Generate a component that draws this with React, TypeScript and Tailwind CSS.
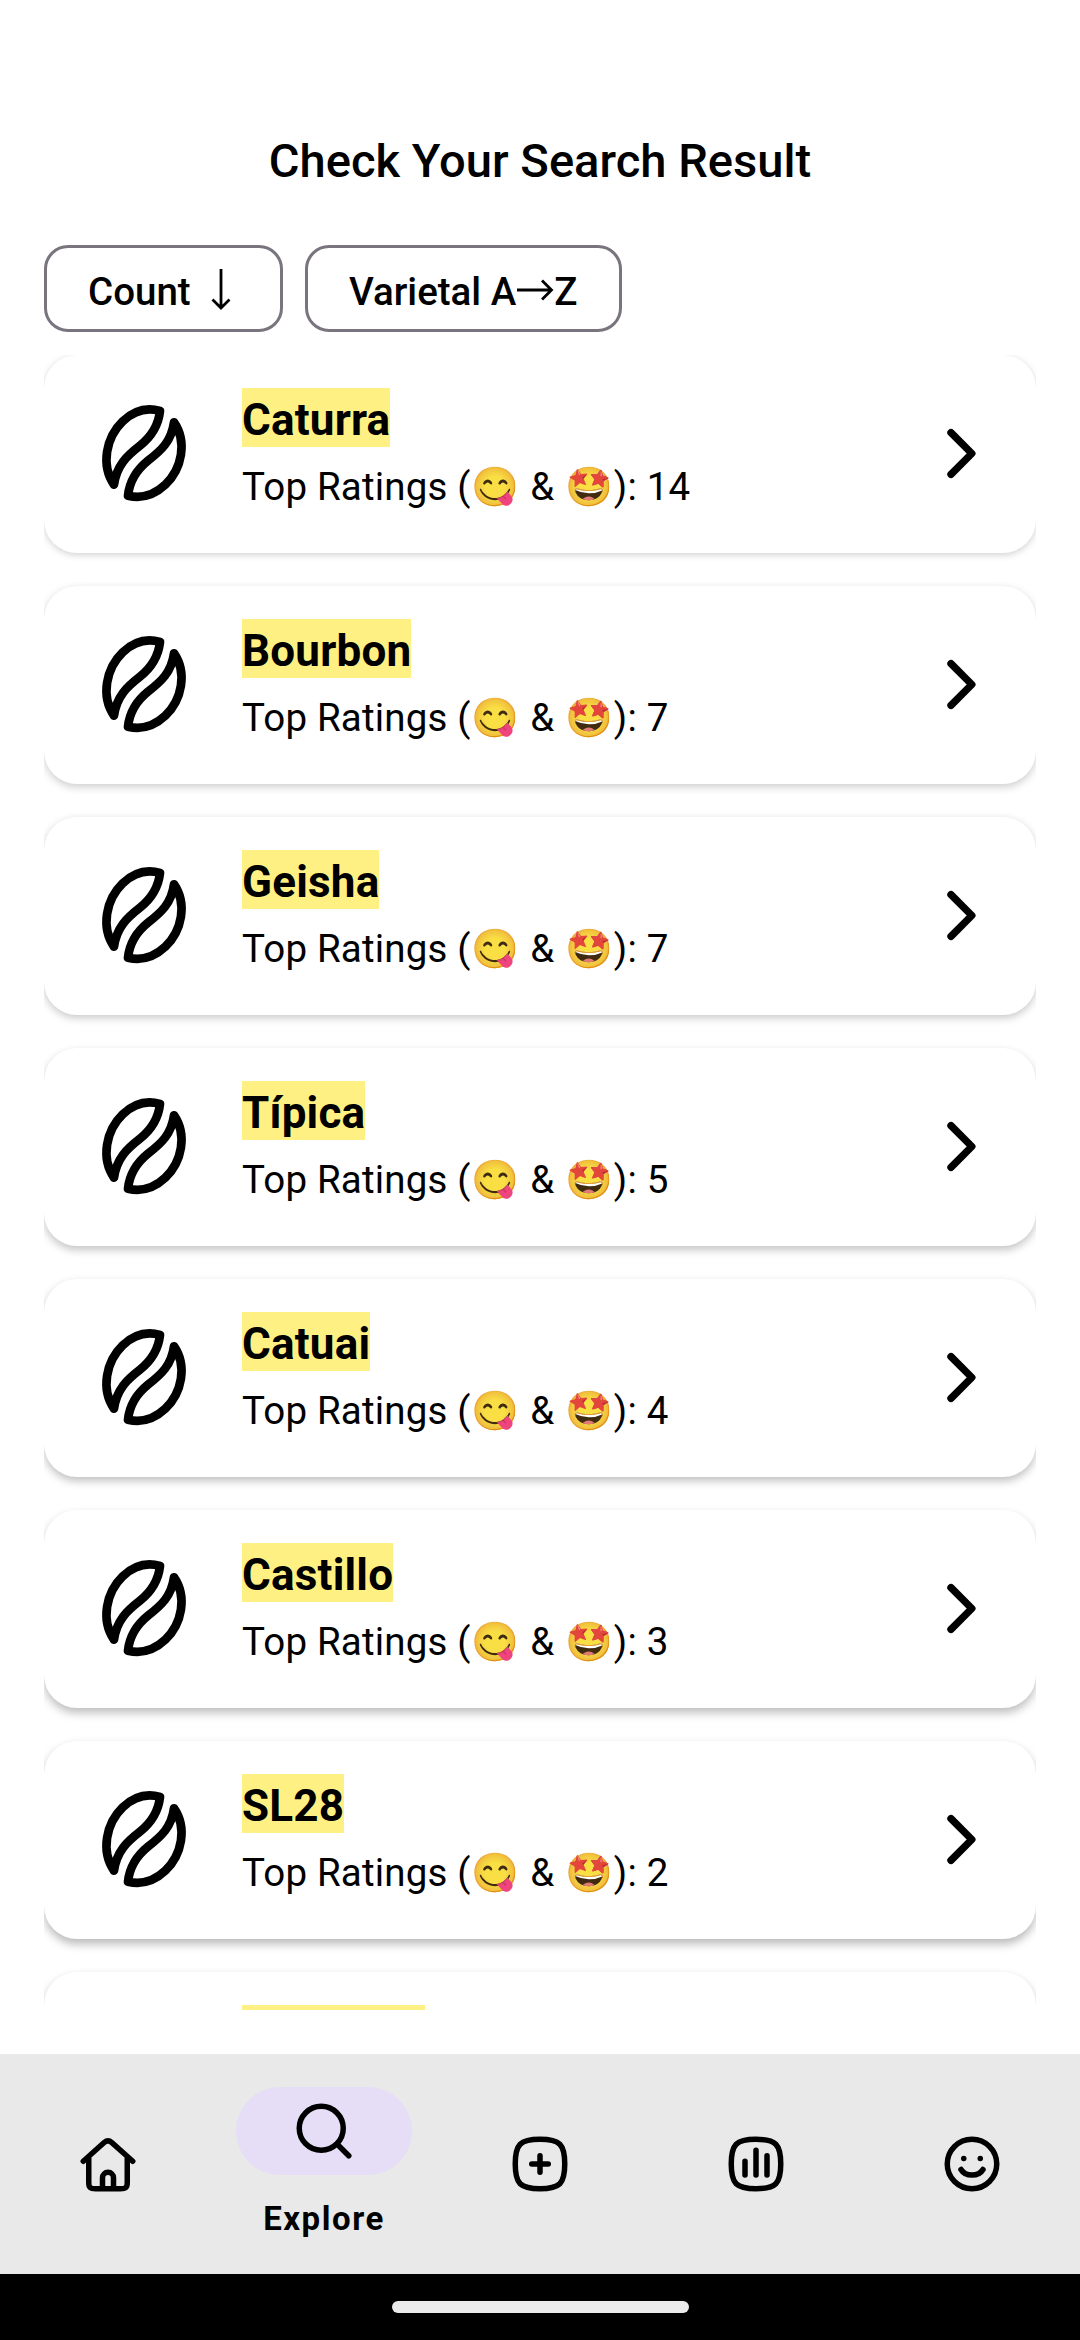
import React from "react";

type Varietal = { name: string; count: number; shadow: string };

const varietals: Varietal[] = [
  { name: "Caturra", count: 14, shadow: "shadow-[0_2px_7px_rgba(0,0,0,0.18)]" },
  { name: "Bourbon", count: 7, shadow: "shadow-[0_3px_8px_rgba(0,0,0,0.20)]" },
  { name: "Geisha", count: 7, shadow: "shadow-[0_3px_8px_rgba(0,0,0,0.22)]" },
  { name: "Típica", count: 5, shadow: "shadow-[0_4px_9px_rgba(0,0,0,0.23)]" },
  { name: "Catuai", count: 4, shadow: "shadow-[0_4px_9px_rgba(0,0,0,0.25)]" },
  { name: "Castillo", count: 3, shadow: "shadow-[0_5px_10px_rgba(0,0,0,0.26)]" },
  { name: "SL28", count: 2, shadow: "shadow-[0_5px_10px_rgba(0,0,0,0.28)]" },
];

function BeanIcon() {
  return (
    <svg className="size-[130px] shrink-0" viewBox="0 -3 390 390" fill="none" stroke="black" strokeWidth="26" strokeLinejoin="round">
      <path d="M102 284C62 226 78 142 128 94C160 64 198 51 240 63C236 100 216 138 180 167C140 198 110 226 102 284Z" />
      <path d="M282 97C322 155 306 236 256 284C224 314 186 327 144 317C148 279 168 241 204 212C244 181 274 154 282 97Z" />
    </svg>
  );
}

function ChevronIcon() {
  return (
    <svg className="h-[52px] w-[32px] shrink-0" viewBox="0 0 32 52" fill="none" stroke="black" strokeWidth="7.4" strokeLinecap="round" strokeLinejoin="round">
      <path d="M5 4.7L25.8 25.5L5 46.3" />
    </svg>
  );
}

function NavIcon({ children }: { children: React.ReactNode }) {
  return (
    <svg className="size-[66px]" viewBox="0 0 24 24" fill="none" stroke="black" strokeWidth="2" strokeLinecap="round" strokeLinejoin="round">
      {children}
    </svg>
  );
}

function Emoji({ children }: { children: string }) {
  return <span className="mx-[0.8px] inline-block leading-none saturate-[.88]">{children}</span>;
}

const squircle = "M3 12C3 4.8 4.8 3 12 3s9 1.8 9 9-1.8 9-9 9-9-1.8-9-9Z";

function Card({ item }: { item: Varietal }) {
  return (
    <li className={`flex h-[198px] shrink-0 items-center rounded-[33px] bg-white pl-9 ${item.shadow}`}>
      <BeanIcon />
      <div className="ml-8 flex h-full flex-1 flex-col items-start pt-[33px]">
        <span className="h-[59px] bg-[#fff084] pt-[4px] text-[44px] leading-[56px] font-bold tracking-[0.2px]">{item.name}</span>
        <span className="mt-[14px] h-[51px] text-[38.5px] leading-[51px] tracking-[0.18px] whitespace-pre">
          Top Ratings (<Emoji>😋</Emoji> &amp; <Emoji>🤩</Emoji>): {item.count}
        </span>
      </div>
      <div className="mr-[58px]">
        <ChevronIcon />
      </div>
    </li>
  );
}

export default function App() {
  return (
    <div className="flex h-[2340px] w-[1080px] flex-col overflow-hidden bg-white font-['Roboto',sans-serif] text-black">
      <h1 className="mt-[129px] h-[64px] text-center text-[47.1px] leading-[64px] font-medium">Check Your Search Result</h1>
      <div className="mt-[52px] ml-[44px] flex h-[87px] gap-[22px]">
        <button className="flex w-[239px] items-center rounded-[24px] border-[3px] border-[#79747e] pt-[7px] pl-[41px] text-[38.5px] font-medium">
          Count
          <svg className="-mt-[5px] ml-[20px] h-[42px] w-[20px]" viewBox="0 0 20 42" fill="none" stroke="black" strokeWidth="2.8">
            <path d="M10 0V38M1.5 30.5L10 39L18.5 30.5" />
          </svg>
        </button>
        <button className="flex w-[317px] items-center rounded-[24px] border-[3px] border-[#79747e] pt-[7px] pl-[41px] text-[38.5px] font-medium">
          Varietal A
          <svg className="-mt-[4px] h-[22px] w-[38px]" viewBox="0 0 38 22" fill="none" stroke="black" strokeWidth="2.8">
            <path d="M1 11H35M26 1.5L35.5 11L26 20.5" />
          </svg>
          Z
        </button>
      </div>
      <ul className="mx-[44px] mt-[23px] flex h-[1655px] flex-col gap-[33px] overflow-hidden">
        {varietals.map((item) => (
          <Card key={item.name} item={item} />
        ))}
        <li className="h-[198px] shrink-0 rounded-[33px] bg-white pt-[33px] pl-[198px] shadow-[0_5px_10px_rgba(0,0,0,0.28)]">
          <div className="h-[59px] w-[183px] bg-[#fff084]" />
        </li>
      </ul>
      <nav className="mt-[44px] grid h-[220px] grid-cols-5 items-center justify-items-center bg-[#e9e9e9]">
        <NavIcon>
          <path d="M3 11l7.6-6.8q1.4-1.2 2.8 0L21 11M5 9.8v8.8c0 2 .5 2.4 2.5 2.4h9c2 0 2.5-.4 2.5-2.4V9.8M10 21v-4a2 2 0 0 1 4 0v4" />
        </NavIcon>
        <div className="flex h-full flex-col items-center pt-[33px]">
          <div className="flex h-[88px] w-[176px] items-center justify-center rounded-full bg-[#e6def6]">
            <NavIcon>
              <circle cx="11" cy="11" r="8" />
              <path d="M17 17l4 4" />
            </NavIcon>
          </div>
          <span className="mt-[22px] text-[33px] leading-[44px] font-bold tracking-[1.55px]">Explore</span>
        </div>
        <NavIcon>
          <path d={squircle} />
          <path d="M12 9v6M9 12h6" />
        </NavIcon>
        <NavIcon>
          <path d={squircle} />
          <path d="M8 11v5M12 7v9M16 9v7" />
        </NavIcon>
        <NavIcon>
          <circle cx="12" cy="12" r="9" />
          <path d="M8 14c1.6 2.7 6.4 2.7 8 0" />
          <path d="M9 10h.01M15 10h.01" />
        </NavIcon>
      </nav>
      <div className="flex h-[66px] justify-center bg-black pt-[27px]">
        <div className="h-[12px] w-[297px] rounded-full bg-[#ebebeb]" />
      </div>
    </div>
  );
}
